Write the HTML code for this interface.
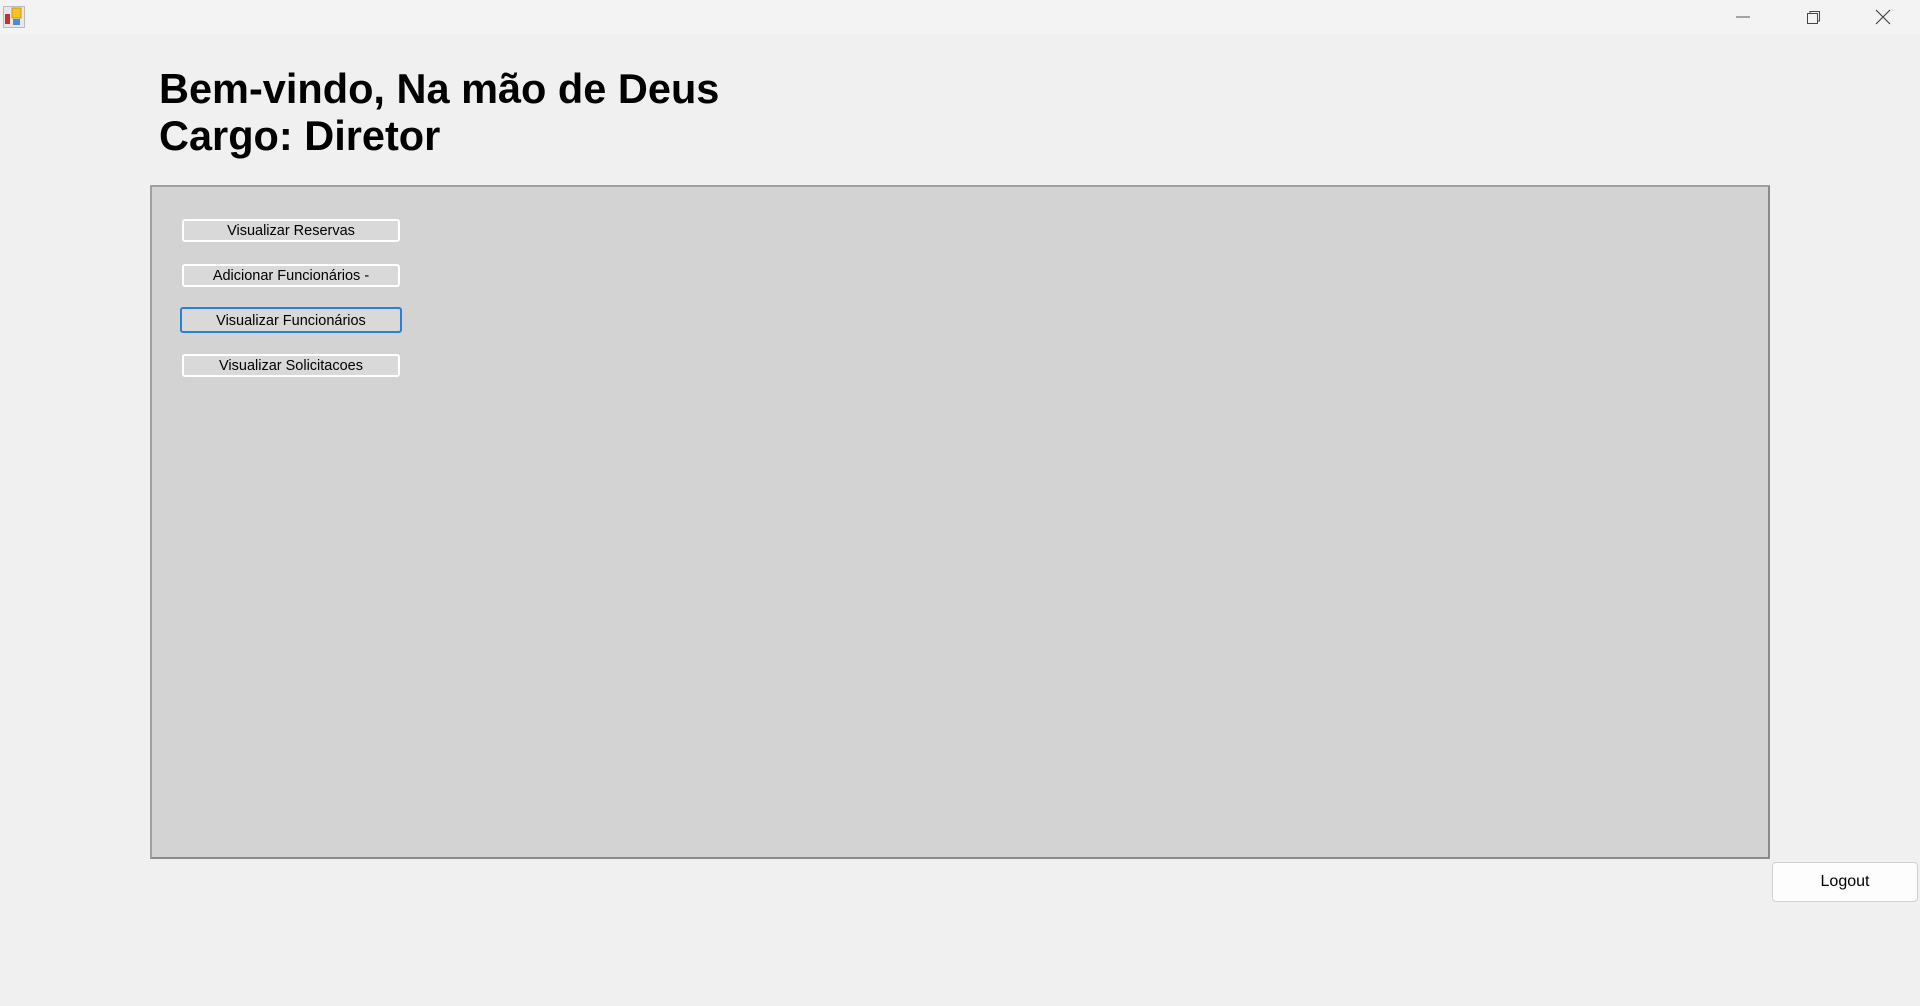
<!DOCTYPE html>
<html><head><meta charset="utf-8"><style>
*{margin:0;padding:0;box-sizing:border-box}
body{width:1920px;height:1006px;background:#f0f0f0;font-family:"Liberation Sans",Arial,sans-serif;position:relative;overflow:hidden}
.tb{position:absolute;left:0;top:0;width:1920px;height:35px;background:#f3f3f3}
.h{position:absolute;left:159px;font-weight:bold;font-size:41.5px;color:#000;line-height:1}
.panel{position:absolute;left:150px;top:185px;width:1620px;height:674px;background:#d3d3d3;border:2px solid #a0a0a0;border-right-color:#8a8a8a;border-bottom-color:#8a8a8a}
.btn{position:absolute;left:182px;width:218px;height:23px;border:2px solid #fff;border-radius:3px;background:#d9d9d9;font-size:14.5px;text-align:center;line-height:21px;color:#000}
.focus{border:2px solid #2a7fd6;height:26px;line-height:24px;left:180px;width:222px}
.logout{position:absolute;left:1772px;top:862px;width:146px;height:40px;background:#fdfdfd;border:1px solid #d0d0d0;border-radius:4px;font-size:16px;text-align:center;line-height:38px}
</style></head><body>
<div class="tb">
<svg style="position:absolute;left:3px;top:6px" width="22" height="22" viewBox="0 0 22 22"><rect x="0.5" y="0.5" width="21" height="21" fill="#e8e8e8" stroke="#bbb"/><rect x="9" y="2" width="9" height="10" fill="#f3c423" stroke="#c99a10"/><rect x="2" y="8" width="5" height="10" fill="#c8302a"/><rect x="10" y="13" width="7" height="6" fill="#4a8ae0"/></svg>
<svg style="position:absolute;left:1735px;top:9px" width="16" height="16"><line x1="1" y1="8" x2="15" y2="8" stroke="#555"/></svg>
<svg style="position:absolute;left:1805px;top:9px" width="16" height="16"><rect x="2.5" y="4.5" width="10" height="10" fill="none" stroke="#444"/><path d="M5 4.5V2.5h9.5V12h-2" fill="none" stroke="#444"/></svg>
<svg style="position:absolute;left:1875px;top:9px" width="16" height="16"><path d="M1 1L15 15M15 1L1 15" stroke="#444" stroke-width="1.2"/></svg>
</div>
<div class="h" style="top:68px">Bem-vindo, Na mão de Deus</div>
<div class="h" style="top:115px">Cargo: Diretor</div>
<div class="panel"></div>
<div class="btn" style="top:219px">Visualizar Reservas</div>
<div class="btn" style="top:264px">Adicionar Funcionários -</div>
<div class="btn focus" style="top:307px">Visualizar Funcionários</div>
<div class="btn" style="top:354px">Visualizar Solicitacoes</div>
<div class="logout">Logout</div>
</body></html>
